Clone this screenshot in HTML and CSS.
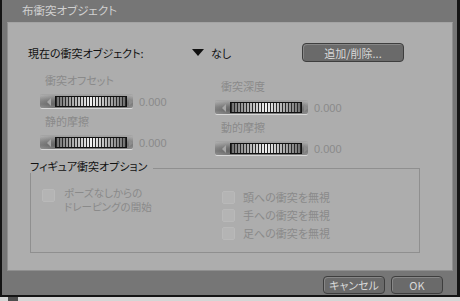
FILE: index.html
```html
<!DOCTYPE html>
<html lang="ja">
<head>
    <meta charset="UTF-8">
    <title>布衝突オブジェクト</title>
    <link rel="stylesheet" href="styles.css">
</head>
<body>
    <div class="window">
        <div class="titlebar">布衝突オブジェクト</div>

        <div class="panel">
            <div class="current-row">
                <span class="current-label">現在の衝突オブジェクト:</span>
                <span class="dropdown"><span class="tri"></span>なし</span>
                <button class="btn btn-add">追加/削除...</button>
            </div>

            <div class="sliders">
                <div class="slider-col">
                    <div class="field">
                        <div class="field-label">衝突オフセット</div>
                        <div class="slider-row">
                            <div class="slider"><span class="arrow-l"></span><span class="rail"></span><span class="arrow-r"></span></div>
                            <span class="value">0.000</span>
                        </div>
                    </div>
                    <div class="field">
                        <div class="field-label">静的摩擦</div>
                        <div class="slider-row">
                            <div class="slider"><span class="arrow-l"></span><span class="rail"></span><span class="arrow-r"></span></div>
                            <span class="value">0.000</span>
                        </div>
                    </div>
                </div>
                <div class="slider-col slider-col-right">
                    <div class="field">
                        <div class="field-label">衝突深度</div>
                        <div class="slider-row">
                            <div class="slider"><span class="arrow-l"></span><span class="rail"></span><span class="arrow-r"></span></div>
                            <span class="value">0.000</span>
                        </div>
                    </div>
                    <div class="field">
                        <div class="field-label">動的摩擦</div>
                        <div class="slider-row">
                            <div class="slider"><span class="arrow-l"></span><span class="rail"></span><span class="arrow-r"></span></div>
                            <span class="value">0.000</span>
                        </div>
                    </div>
                </div>
            </div>

            <div class="group">
                <div class="group-head">
                    <span class="group-title">フィギュア衝突オプション</span>
                    <span class="group-line"></span>
                </div>
                <div class="group-body">
                    <div class="option-left">
                        <span class="check"></span>
                        <div class="option-text">
                            <div class="text-line">ポーズなしからの</div>
                            <div class="text-line">ドレーピングの開始</div>
                        </div>
                    </div>
                    <div class="option-list">
                        <div class="option"><span class="check"></span><span class="option-text">頭への衝突を無視</span></div>
                        <div class="option"><span class="check"></span><span class="option-text">手への衝突を無視</span></div>
                        <div class="option"><span class="check"></span><span class="option-text">足への衝突を無視</span></div>
                    </div>
                </div>
            </div>
        </div>

        <div class="footer">
            <button class="btn btn-cancel">キャンセル</button>
            <button class="btn btn-ok">OK</button>
        </div>
    </div>
    <div class="taskbar"><span class="taskbar-block"></span></div>
</body>
</html>
```

FILE: styles.css
```css
* {
    box-sizing: border-box;
}
body {
    margin: 0;
    background: #d6d6d6;
    font-family: "Noto Sans CJK JP", sans-serif;
    font-size: 11px;
    font-feature-settings: "palt";
    color: #111;
    width: 460px;
    height: 301px;
    overflow: hidden;
}
.window {
    width: 460px;
    height: 297px;
    background: #767676;
    border-left: 2px solid #141414;
    border-right: 3px solid #141414;
    border-bottom: 2px solid #141414;
}
.titlebar {
    height: 22px;
    line-height: 20px;
    padding-left: 20px;
    color: #d0d0d0;
    font-size: 11.5px;
}
.panel {
    height: 249px;
    margin: 0 4px 0 5px;
    background: #adadad;
    border: 1px solid #8f8f8f;
    border-top-color: #a4a4a4;
}
.current-row {
    display: flex;
    align-items: center;
    height: 19px;
    margin-top: 20px;
    padding-left: 20px;
}
.current-label {
    width: 164px;
}
.dropdown {
    display: flex;
    align-items: center;
}
.tri {
    width: 0;
    height: 0;
    border-left: 6px solid transparent;
    border-right: 6px solid transparent;
    border-top: 7px solid #111;
    margin-right: 7px;
}
.btn {
    font-family: "Noto Sans CJK JP", sans-serif;
    font-size: 11px;
    font-feature-settings: "palt";
    color: #d8d8d8;
    background: #6a6a6a;
    border: 1px solid #3e3e3e;
    border-radius: 4px;
    box-shadow: inset 1px 1px 0 #878787;
    padding: 0;
    height: 19px;
    line-height: 16px;
}
.btn-add {
    width: 102px;
    margin-left: auto;
    margin-right: 48px;
}
.sliders {
    display: grid;
    grid-template-columns: 175px 1fr;
    margin-top: 11px;
    padding-left: 32px;
}
.slider-col {
    display: flex;
    flex-direction: column;
    gap: 6px;
}
.slider-col-right {
    padding-top: 6px;
}
.field-label {
    height: 14px;
    line-height: 14px;
    padding-left: 5px;
    margin-bottom: 8px;
    color: #8a8a8a;
}
.slider-col-right .field-label {
    padding-left: 6px;
}
.slider-row {
    display: flex;
    align-items: center;
    height: 13px;
}
.slider {
    display: flex;
    align-items: center;
    width: 93px;
    height: 13px;
    padding-left: 7px;
    border-radius: 2px;
    background: linear-gradient(90deg, rgba(255, 255, 255, 0.15), rgba(0, 0, 0, 0) 14%, rgba(0, 0, 0, 0) 86%, rgba(255, 255, 255, 0.15)),
        linear-gradient(180deg, #a2a2a2, #727272 45%, #666 70%, #7e7e7e);
    box-shadow: 0 1px 0 #d8d8d8, 0 -1px 0 #a4a4a4;
}
.arrow-l {
    width: 0;
    height: 0;
    border-top: 4px solid transparent;
    border-bottom: 4px solid transparent;
    border-right: 4px solid #a6a6a6;
    margin-right: 4px;
}
.arrow-r {
    width: 0;
    height: 0;
    border-top: 4px solid transparent;
    border-bottom: 4px solid transparent;
    border-left: 4px solid #8c8c8c;
    margin-left: 2px;
}
.rail {
    width: 72px;
    height: 11px;
    border: 1px solid #111;
    background: repeating-linear-gradient(90deg, #2a2a2a 0 1px, transparent 1px 3px),
        linear-gradient(90deg, #6e6e6e, #f2f2f2 50%, #6e6e6e);
}
.value {
    margin-left: 6px;
    font-family: "Liberation Sans", sans-serif;
    font-size: 11px;
    color: #8a8a8a;
}
.group {
    width: 390px;
    margin: 4px 0 0 22px;
}
.group-head {
    display: flex;
    height: 14px;
}
.group-title {
    line-height: 14px;
    padding-right: 6px;
}
.group-line {
    flex: 1;
    margin-top: 9px;
    border-top: 1px solid #8f8f8f;
    border-right: 1px solid #8f8f8f;
}
.group-body {
    display: grid;
    grid-template-columns: 180px 1fr;
    align-items: start;
    height: 80px;
    padding: 13px 0 0 11px;
    border: 1px solid #8f8f8f;
    border-top: none;
}
.option {
    display: flex;
    align-items: center;
    height: 18px;
    color: #8a8a8a;
}
.option-left {
    display: flex;
    align-items: flex-start;
    color: #8a8a8a;
}
.option-left .check {
    margin-top: 3px;
}
.text-line {
    height: 14px;
    line-height: 14px;
    font-size: 10.5px;
}
.option-list {
    padding-top: 2px;
}
.check {
    flex: none;
    width: 13px;
    height: 13px;
    margin-right: 9px;
    border-radius: 2px;
    background: #b4b4b4;
    border: 1px solid #b9b9b9;
}
.option-list .check {
    margin-right: 8px;
}
.footer {
    display: flex;
    justify-content: flex-end;
    gap: 6px;
    padding: 5px 14px 0 0;
}
.btn-cancel {
    width: 62px;
    height: 18px;
}
.btn-ok {
    width: 52px;
    height: 18px;
}
.taskbar {
    height: 4px;
    padding-left: 8px;
}
.taskbar-block {
    display: block;
    width: 10px;
    height: 4px;
    background: #4e4e4e;
}
```
